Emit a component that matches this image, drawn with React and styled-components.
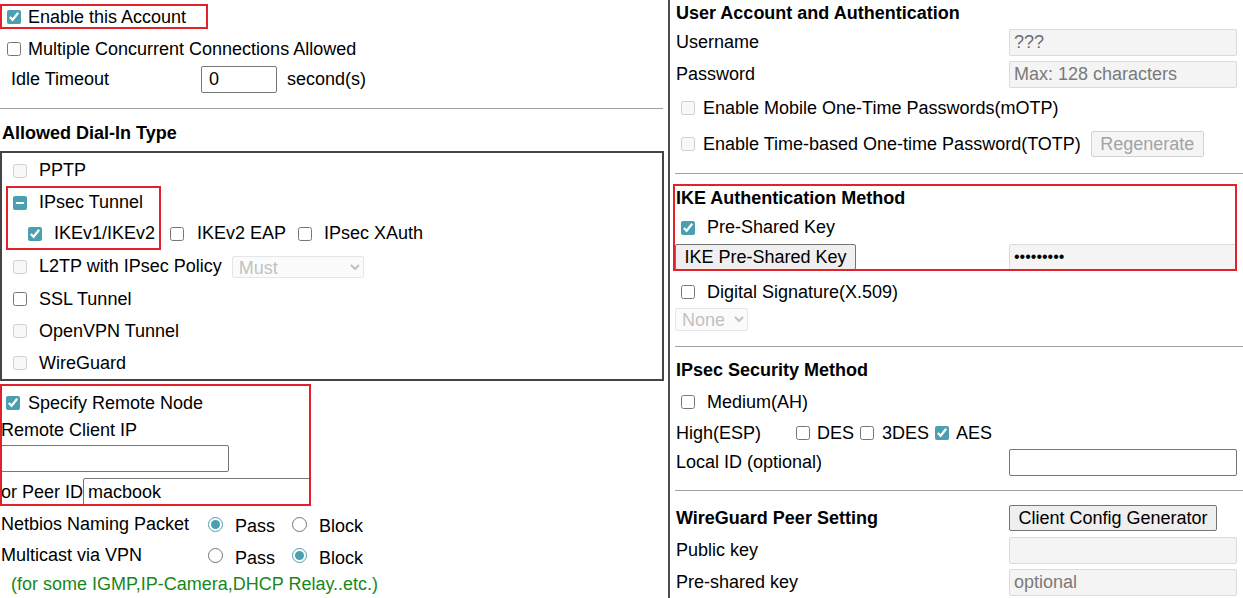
import React, { useEffect, useRef } from "react";
import styled, { createGlobalStyle } from "styled-components";

const ACCENT = "#4a9fb0";
const RED = "#e3212b";

const Global = createGlobalStyle`
  html, body { margin: 0; padding: 0; overflow: hidden; background: #fff; }
  body { font-family: "Liberation Sans", Arial, sans-serif; font-size: 18px; color: #000; }
  * { box-sizing: border-box; }
`;

const Page = styled.div`
  display: flex;
  width: 1243px;
  height: 598px;
  overflow: hidden;
`;

const LeftCol = styled.div`
  width: 664px;
  flex-shrink: 0;
  display: flex;
  flex-direction: column;
`;

const Divider = styled.div`
  width: 2px;
  margin-left: 4px;
  background: #4d4d4d;
  flex-shrink: 0;
`;

const RightCol = styled.div`
  width: 568px;
  flex-shrink: 0;
  margin-left: 5px;
  display: flex;
  flex-direction: column;
`;

const Row = styled.div`
  display: flex;
  align-items: ${(p) => p.$align || "center"};
  flex-shrink: 0;
  height: ${(p) => p.$h || 32}px;
  padding-left: ${(p) => p.$pl || 0}px;
  margin-top: ${(p) => p.$mt || 0}px;
  margin-left: ${(p) => p.$ml || 0}px;
  margin-bottom: ${(p) => p.$mb || 0}px;
  white-space: nowrap;
`;

const Item = styled.label`
  display: inline-flex;
  align-items: center;
  gap: ${(p) => (p.$gap == null ? 12 : p.$gap)}px;
  margin-left: ${(p) => p.$ml || 0}px;
  white-space: nowrap;
`;

const CheckInput = styled.input.attrs({ type: "checkbox" })`
  margin: 0;
  width: 14px;
  height: 14px;
  flex-shrink: 0;
  accent-color: ${ACCENT};
`;

const RadioInput = styled.input.attrs({ type: "radio" })`
  margin: 0;
  width: 15px;
  height: 15px;
  flex-shrink: 0;
  accent-color: ${ACCENT};
`;

const RadioText = styled.span`
  padding-top: 5px;
`;

function Check({ indeterminate, ...rest }) {
  const ref = useRef(null);
  useEffect(() => {
    if (ref.current) ref.current.indeterminate = !!indeterminate;
  }, [indeterminate]);
  return <CheckInput ref={ref} readOnly {...rest} />;
}

const Annot = styled.div`
  outline: 2px solid ${RED};
  outline-offset: -2px;
  flex-shrink: 0;
  width: ${(p) => p.$w}px;
  height: ${(p) => p.$h}px;
  margin-top: ${(p) => p.$mt || 0}px;
  margin-left: ${(p) => p.$ml || 0}px;
  padding: ${(p) => p.$pad || "0"};
  display: flex;
  flex-direction: ${(p) => p.$dir || "column"};
  align-items: ${(p) => p.$align || "stretch"};
`;

const Rule = styled.div`
  height: 1px;
  flex-shrink: 0;
  background: #a0a0a0;
  width: ${(p) => p.$w}px;
  margin-top: ${(p) => p.$mt}px;
`;

const Title = styled.div`
  font-weight: bold;
  height: ${(p) => p.$h || 20}px;
  line-height: ${(p) => p.$h || 20}px;
  margin-top: ${(p) => p.$mt || 0}px;
  padding-left: ${(p) => p.$pl || 0}px;
  flex-shrink: 0;
  white-space: nowrap;
`;

const Label = styled.span`
  display: inline-block;
  width: ${(p) => (p.$w ? `${p.$w}px` : "auto")};
  padding-left: ${(p) => p.$pl || 0}px;
  flex-shrink: 0;
  white-space: nowrap;
  font-weight: ${(p) => (p.$bold ? "bold" : "normal")};
`;

const TextInput = styled.input`
  width: ${(p) => p.$w || 228}px;
  height: ${(p) => p.$h || 27}px;
  margin: 0;
  margin-left: ${(p) => p.$ml || 0}px;
  margin-top: ${(p) => p.$mt || 0}px;
  padding: 0 ${(p) => p.$px || 4}px;
  font-family: "Liberation Sans", Arial, sans-serif;
  font-size: ${(p) => p.$fs || 18}px;
  color: #000;
  background: ${(p) => (p.$muted ? "#f4f4f4" : "#fff")};
  border: 1px solid ${(p) => (p.$muted ? "#dadada" : "#767676")};
  border-radius: 2px;
  flex-shrink: 0;
  outline: none;
  &:disabled {
    background: #f4f4f4;
    border-color: #dadada;
    color: #6d6d6d;
  }
  &::placeholder {
    color: #7a7a7a;
  }
`;

const Button = styled.button`
  height: 26px;
  width: ${(p) => (p.$w ? `${p.$w}px` : "auto")};
  margin: 0;
  margin-left: ${(p) => p.$ml || 0}px;
  padding: 0 8px;
  font-family: "Liberation Sans", Arial, sans-serif;
  font-size: 18px;
  color: #000;
  background: #efefef;
  border: 1px solid #767676;
  border-radius: 2px;
  flex-shrink: 0;
  white-space: nowrap;
  &:disabled {
    color: #a3a3a3;
    background: #f5f5f5;
    border-color: #d3d3d3;
  }
`;

const Select = styled.select`
  width: ${(p) => p.$w}px;
  height: ${(p) => p.$h || 23}px;
  margin: 0;
  margin-left: ${(p) => p.$ml || 0}px;
  padding: 0 2px;
  font-family: "Liberation Sans", Arial, sans-serif;
  font-size: 18px;
  color: #a8a8a8;
  background: #fafafa;
  border: 1px solid #dcdcdc;
  border-radius: 2px;
  flex-shrink: 0;
`;

const DialBox = styled.div`
  margin-top: 8px;
  border: 2px solid #444;
  padding-top: 2px;
  display: flex;
  flex-direction: column;
  flex-shrink: 0;
`;

const FieldRow = styled.div`
  display: grid;
  grid-template-columns: ${(p) => p.$cols || "333px 228px"};
  align-items: center;
  height: ${(p) => p.$h || 32}px;
  padding-left: ${(p) => (p.$pl == null ? 1 : p.$pl)}px;
  margin-top: ${(p) => p.$mt || 0}px;
  flex-shrink: 0;
  white-space: nowrap;
`;

const Note = styled.div`
  color: #17881a;
  padding-left: 11px;
  height: 26px;
  line-height: 26px;
  white-space: nowrap;
`;

const Radio = ({ name, checked, children, ml }) => (
  <Item $gap={12} $ml={ml}>
    <RadioInput name={name} defaultChecked={checked} />
    <RadioText>{children}</RadioText>
  </Item>
);

export default function App() {
  return (
    <>
      <Global />
      <Page>
        <LeftCol>
          <Annot $w={208} $h={25} $mt={4} $dir="row" $align="center" $pad="1px 0 0 7px">
            <Item $gap={7}>
              <Check defaultChecked />
              <span>Enable this Account</span>
            </Item>
          </Annot>
          <Row $h={32} $mt={4} $pl={7}>
            <Item $gap={7}>
              <Check />
              <span>Multiple Concurrent Connections Allowed</span>
            </Item>
          </Row>
          <Row $h={29}>
            <Label $w={201} $pl={11}>Idle Timeout</Label>
            <TextInput $w={76} $px={7} defaultValue="0" />
            <Label $pl={10}>second(s)</Label>
          </Row>
          <Rule $w={663} $mt={14} />
          <Title $mt={14} $pl={2}>Allowed Dial-In Type</Title>
          <DialBox>
            <Row $h={31} $pl={11}>
              <Item><Check disabled /><span>PPTP</span></Item>
            </Row>
            <Row $h={64} $ml={4} $align="flex-end">
              <Annot $w={155} $h={64} $pad="1px 0 0 7px">
                <Row $h={31}>
                  <Item><Check indeterminate /><span>IPsec Tunnel</span></Item>
                </Row>
                <Row $h={31} $pl={15}>
                  <Item><Check defaultChecked /><span>IKEv1/IKEv2</span></Item>
                </Row>
              </Annot>
              <Row $h={31} $mb={1} $ml={9}>
                <Item $gap={13}><Check /><span>IKEv2 EAP</span></Item>
                <Item $ml={12}><Check /><span>IPsec XAuth</span></Item>
              </Row>
            </Row>
            <Row $h={33} $pl={11}>
              <Item><Check disabled /><span>L2TP with IPsec Policy</span></Item>
              <Select $w={132} $h={22} $ml={10} disabled defaultValue="Must">
                <option>Must</option>
              </Select>
            </Row>
            <Row $h={32} $pl={11}>
              <Item><Check /><span>SSL Tunnel</span></Item>
            </Row>
            <Row $h={32} $pl={11}>
              <Item><Check disabled /><span>OpenVPN Tunnel</span></Item>
            </Row>
            <Row $h={32} $pl={11}>
              <Item><Check disabled /><span>WireGuard</span></Item>
            </Row>
          </DialBox>
          <Annot $w={311} $h={122} $mt={3} $pad="2px 0 0 0">
            <Row $h={34} $pl={6}>
              <Item $gap={8}><Check defaultChecked /><span>Specify Remote Node</span></Item>
            </Row>
            <Row $h={20} $pl={1}>Remote Client IP</Row>
            <TextInput $w={228} $h={27} $ml={1} $mt={5} />
            <Row $h={28} $mt={6}>
              <Label $w={83} $pl={1}>or Peer ID</Label>
              <TextInput $w={228} $h={28} defaultValue="macbook" />
            </Row>
          </Annot>
          <Row $h={32} $mt={2}>
            <Label $w={208} $pl={1}>Netbios Naming Packet</Label>
            <Radio name="netbios" checked>Pass</Radio>
            <Radio name="netbios" ml={17}>Block</Radio>
          </Row>
          <Row $h={31}>
            <Label $w={208} $pl={1}>Multicast via VPN</Label>
            <Radio name="mcast">Pass</Radio>
            <Radio name="mcast" ml={17} checked>Block</Radio>
          </Row>
          <Note>(for some IGMP,IP-Camera,DHCP Relay..etc.)</Note>
        </LeftCol>
        <Divider />
        <RightCol>
          <Title $h={26} $pl={1}>User Account and Authentication</Title>
          <FieldRow>
            <span>Username</span>
            <TextInput disabled defaultValue="???" />
          </FieldRow>
          <FieldRow>
            <span>Password</span>
            <TextInput disabled placeholder="Max: 128 characters" />
          </FieldRow>
          <Row $h={36} $pl={6}>
            <Item $gap={8}><Check disabled /><span>Enable Mobile One-Time Passwords(mOTP)</span></Item>
          </Row>
          <Row $h={36} $pl={6}>
            <Item $gap={8}><Check disabled /><span>Enable Time-based One-time Password(TOTP)</span></Item>
            <Button $ml={10} $w={113} disabled>Regenerate</Button>
          </Row>
          <Rule $w={568} $mt={11} />
          <Annot $w={564} $h={87} $mt={10} $ml={-2} $pad="0 0 0 2px">
            <Title $h={28} $pl={1}>IKE Authentication Method</Title>
            <Row $h={31} $pl={6}>
              <Item><Check defaultChecked /><span>Pre-Shared Key</span></Item>
            </Row>
            <FieldRow $h={28} $pl={0} $cols="334px 228px">
              <Button $w={181}>IKE Pre-Shared Key</Button>
              <TextInput type="password" readOnly $muted $fs={16} defaultValue="123456789" />
            </FieldRow>
          </Annot>
          <Row $h={32} $mt={5} $pl={6}>
            <Item><Check /><span>Digital Signature(X.509)</span></Item>
          </Row>
          <Row $h={23}>
            <Select $w={73} $h={23} disabled defaultValue="None">
              <option>None</option>
            </Select>
          </Row>
          <Rule $w={568} $mt={15} />
          <Title $h={26} $mt={10} $pl={1}>IPsec Security Method</Title>
          <Row $h={32} $mt={3} $pl={6}>
            <Item><Check /><span>Medium(AH)</span></Item>
          </Row>
          <Row $h={30}>
            <Label $w={121} $pl={1}>High(ESP)</Label>
            <Item $gap={7}><Check /><span>DES</span></Item>
            <Item $gap={8} $ml={6}><Check /><span>3DES</span></Item>
            <Item $gap={7} $ml={6}><Check defaultChecked /><span>AES</span></Item>
          </Row>
          <FieldRow $h={28}>
            <span>Local ID (optional)</span>
            <TextInput />
          </FieldRow>
          <Rule $w={568} $mt={14} />
          <FieldRow $mt={11}>
            <Label $bold>WireGuard Peer Setting</Label>
            <Button $w={208}>Client Config Generator</Button>
          </FieldRow>
          <FieldRow>
            <span>Public key</span>
            <TextInput disabled />
          </FieldRow>
          <FieldRow>
            <span>Pre-shared key</span>
            <TextInput disabled placeholder="optional" />
          </FieldRow>
        </RightCol>
      </Page>
    </>
  );
}
